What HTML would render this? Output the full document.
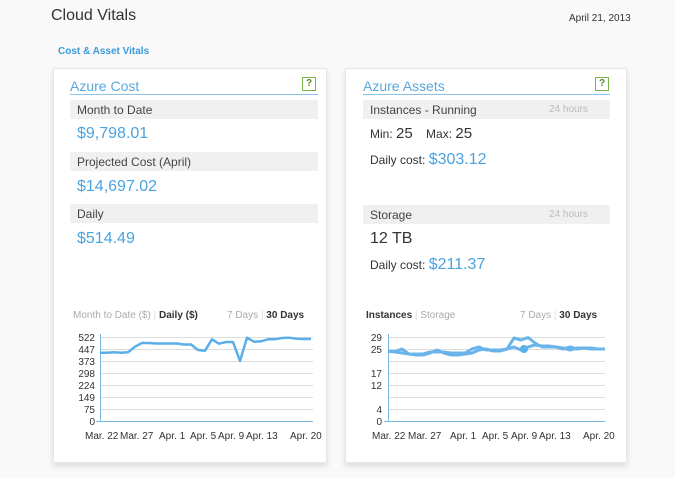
<!DOCTYPE html>
<html><head><meta charset="utf-8"><style>
*{margin:0;padding:0;box-sizing:border-box}
body{width:675px;height:478px;background:#f9f9f9;font-family:"Liberation Sans","DejaVu Sans",sans-serif;position:relative;overflow:hidden;color:#333}
.a{position:absolute;white-space:nowrap}
.card{position:absolute;background:#fff;border:1px solid #e6e6e6;box-shadow:0 3px 6px rgba(0,0,0,.12)}
.row{position:absolute;background:#f0f0f0;height:19px;font-size:12px;color:#444;padding:3px 0 0 7px}
.big{font-size:16px;color:#4aa3df}
.ttl{font-size:14px;color:#5aa7dc}
.q{position:absolute;width:14px;height:14px;border:1px solid #7cb342;color:#558b2f;font-size:10px;font-weight:bold;text-align:center;line-height:12px}
.hr{position:absolute;height:1px;background:#8cc3e8}
.lg{color:#bbb}
</style></head><body>
<div class="a" style="left:51px;top:7px;font-size:16px;color:#333">Cloud Vitals</div>
<div class="a" style="left:569px;top:13px;font-size:10px;color:#333">April 21, 2013</div>
<div class="a" style="left:58px;top:46px;font-size:10px;color:#3a9ad9;font-weight:bold">Cost &amp; Asset Vitals</div>

<div class="card" style="left:53px;top:68px;width:274px;height:395px"></div>
<div class="card" style="left:345px;top:68px;width:282px;height:395px"></div>

<div class="a ttl" style="left:70px;top:78px">Azure Cost</div>
<div class="hr" style="left:70px;top:94px;width:248px"></div>
<div class="q" style="left:302px;top:77px">?</div>
<div class="row" style="left:70px;top:100px;width:248px">Month to Date</div>
<div class="a big" style="left:77px;top:125px">$9,798.01</div>
<div class="row" style="left:70px;top:152px;width:248px">Projected Cost (April)</div>
<div class="a big" style="left:77px;top:178px">$14,697.02</div>
<div class="row" style="left:70px;top:204px;width:248px">Daily</div>
<div class="a big" style="left:77px;top:230px">$514.49</div>

<div class="a" style="left:73px;top:310px;font-size:10px;color:#aaa">Month to Date ($) <span style="color:#ddd">|</span> <b style="color:#333">Daily ($)</b></div>
<div class="a" style="left:227px;top:310px;font-size:10px;color:#aaa">7 Days <span style="color:#ddd">|</span> <b style="color:#333">30 Days</b></div>

<div class="a ttl" style="left:363px;top:78px">Azure Assets</div>
<div class="hr" style="left:363px;top:94px;width:247px"></div>
<div class="q" style="left:595px;top:77px">?</div>
<div class="row" style="left:363px;top:100px;width:247px">Instances - Running<span class="a lg" style="left:186px;top:4px;font-size:10px">24 hours</span></div>
<div class="a" style="left:370px;top:125px;font-size:12px">Min: <span style="font-size:15px">25</span>&nbsp;&nbsp;&nbsp;&nbsp;Max: <span style="font-size:15px">25</span></div>
<div class="a" style="left:370px;top:151px;font-size:12px">Daily cost: <span class="big">$303.12</span></div>
<div class="row" style="left:363px;top:205px;width:247px">Storage<span class="a lg" style="left:186px;top:4px;font-size:10px">24 hours</span></div>
<div class="a" style="left:370px;top:230px;font-size:16px">12 TB</div>
<div class="a" style="left:370px;top:256px;font-size:12px">Daily cost: <span class="big">$211.37</span></div>

<div class="a" style="left:366px;top:310px;font-size:10px;color:#aaa"><b style="color:#333">Instances</b> <span style="color:#ddd">|</span> Storage</div>
<div class="a" style="left:520px;top:310px;font-size:10px;color:#aaa">7 Days <span style="color:#ddd">|</span> <b style="color:#333">30 Days</b></div>

<svg class="a" style="left:0;top:0" width="675" height="478" font-family="Liberation Sans,sans-serif" font-size="10" fill="#333">
<g stroke="#ddd" stroke-width="1">
<line x1="100" x2="313" y1="337.5" y2="337.5"/><line x1="100" x2="313" y1="349.5" y2="349.5"/><line x1="100" x2="313" y1="361.5" y2="361.5"/><line x1="100" x2="313" y1="373.5" y2="373.5"/><line x1="100" x2="313" y1="385.5" y2="385.5"/><line x1="100" x2="313" y1="397.5" y2="397.5"/><line x1="100" x2="313" y1="409.5" y2="409.5"/>
<line x1="388" x2="605" y1="337.5" y2="337.5"/><line x1="388" x2="605" y1="349.5" y2="349.5"/><line x1="388" x2="605" y1="361.5" y2="361.5"/><line x1="388" x2="605" y1="373.5" y2="373.5"/><line x1="388" x2="605" y1="385.5" y2="385.5"/><line x1="388" x2="605" y1="397.5" y2="397.5"/><line x1="388" x2="605" y1="409.5" y2="409.5"/>
</g>
<g stroke="#7ab8e4" stroke-width="1">
<line x1="100.5" x2="100.5" y1="334" y2="421"/><line x1="96" x2="313" y1="421.5" y2="421.5"/>
<line x1="388.5" x2="388.5" y1="334" y2="421"/><line x1="384" x2="605" y1="421.5" y2="421.5"/>
</g>
<g text-anchor="end">
<text x="95" y="341">522</text><text x="95" y="353">447</text><text x="95" y="365">373</text><text x="95" y="377">298</text><text x="95" y="389">224</text><text x="95" y="401">149</text><text x="95" y="413">75</text><text x="95" y="425">0</text>
<text x="382" y="341">29</text><text x="382" y="353">25</text><text x="382" y="377">17</text><text x="382" y="389">12</text><text x="382" y="413">4</text><text x="382" y="425">0</text>
</g>
<g>
<text x="85" y="439">Mar. 22</text><text x="120" y="439">Mar. 27</text><text x="159" y="439">Apr. 1</text><text x="190" y="439">Apr. 5</text><text x="218" y="439">Apr. 9</text><text x="246" y="439">Apr. 13</text><text x="290" y="439">Apr. 20</text>
<text x="372" y="439">Mar. 22</text><text x="408" y="439">Mar. 27</text><text x="450" y="439">Apr. 1</text><text x="482" y="439">Apr. 5</text><text x="511" y="439">Apr. 9</text><text x="539" y="439">Apr. 13</text><text x="583" y="439">Apr. 20</text>
</g>
<polyline fill="none" stroke="#5aaeea" stroke-width="2.5" stroke-linejoin="round" points="100,352.7 107,352.7 114,352.3 121,352.7 128,352.3 135,346.7 142,343 149,343 156,343.5 163,343.5 170,343.5 177,343.5 184,344.5 191,344.5 198,350 205,350.7 212,339.3 219,343.7 226,342 233,342 240,361 247,337.7 254,341.7 261,341.3 268,339.3 275,339.3 282,338 289,337.7 296,338.7 303,339 311,339"/>
<polyline fill="none" stroke="#6ab4ea" stroke-width="3" stroke-linejoin="round" points="388,351.5 395,351.5 402,349 409,354 416,355 423,355 430,353 437,350 444,353 451,355 458,355 465,354 472,353 479,350 486,349 493,351 500,351 507,349 514,338 521,340 528,337.5 535,343 542,347 549,347 556,347 563,349 570,347 577,349 584,348 591,349 598,349 605,349"/>
<polyline fill="none" stroke="#6ab4ea" stroke-width="3" stroke-linejoin="round" points="388,351 395,352 402,353 409,354 416,354 423,354 430,352 437,352 444,352 451,353 458,353 465,353 472,349 479,347 486,350 493,350 500,350 507,349 514,347 521,350 528,347 535,345 542,346 549,346 556,347 563,348 570,350 577,348 584,348 591,348 598,349 605,349"/>
<circle cx="524" cy="349" r="4" fill="#5aaeea"/>
</svg>
</body></html>
